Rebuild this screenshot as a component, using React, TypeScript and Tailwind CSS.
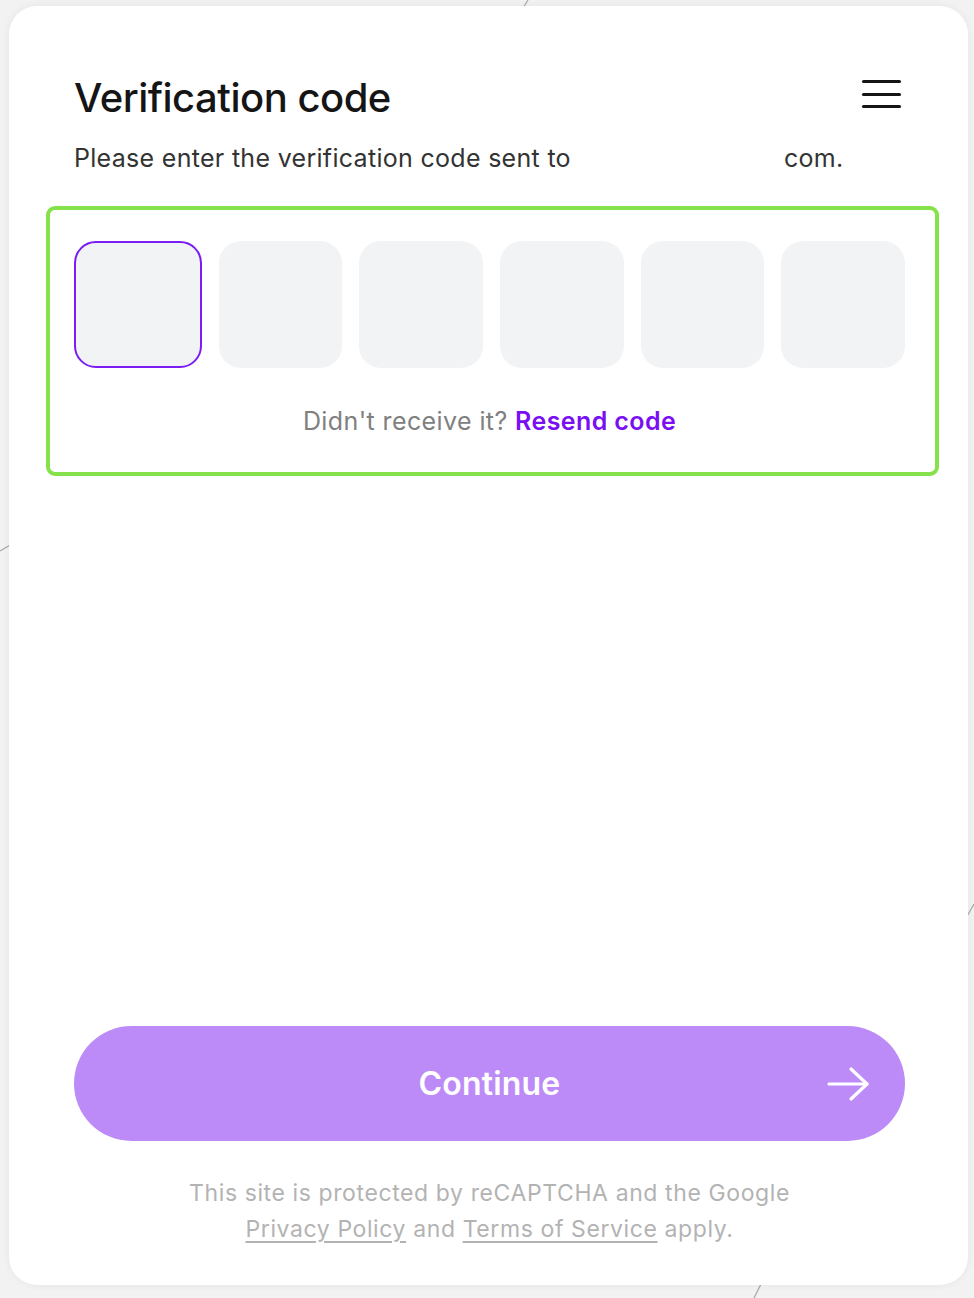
import React from "react";

export default function App() {
  const font = { fontFamily: "Inter, 'Noto Sans', sans-serif" };
  return (
    <div
      className="relative w-[974px] h-[1298px] bg-[#f2f2f2] overflow-hidden pt-[6px] pl-[9px]"
      style={font}
    >
      <svg className="absolute inset-0" width="974" height="1298" viewBox="0 0 974 1298">
        <g stroke="#a8a8a8" strokeWidth="1.2" fill="none">
          <line x1="528" y1="0" x2="523" y2="8" />
          <line x1="0" y1="551" x2="12" y2="544" />
          <line x1="966" y1="918" x2="974" y2="904" />
          <line x1="762" y1="1282" x2="754" y2="1298" />
        </g>
      </svg>
      <div className="relative w-[959px] h-[1279px] bg-white rounded-[28px] shadow-[0_0_8px_rgba(0,0,0,0.06)] flex flex-col pt-[68px] pl-[65px] pr-[63px] pb-[38px]">
        <div className="flex items-start justify-between">
          <h1 className="text-[40px] leading-[48px] font-medium text-[#151515] tracking-[-0.5px]">
            Verification code
          </h1>
          <div className="mt-[6px] mr-[4px] flex flex-col gap-[9.5px] w-[39px]">
            <div className="h-[3px] rounded-full bg-[#151515]" />
            <div className="h-[3px] rounded-full bg-[#151515]" />
            <div className="h-[3px] rounded-full bg-[#151515]" />
          </div>
        </div>
        <p className="mt-[20px] text-[25px] leading-[32px] tracking-[0.3px] text-[#333333] flex">
          <span>Please enter the verification code sent to</span>
          <span className="ml-[213px]">com.</span>
        </p>
        <div className="mt-[32px] -ml-[28px] -mr-[34px] border-4 border-[#86e24a] rounded-[9px] pt-[31px] pl-[24px] pr-[30px] pb-[35px]">
          <div className="flex gap-[17px]">
            <div className="flex-1 h-[127px] rounded-[22px] bg-[#f2f3f4] border-2 border-[#7a1cf2]" />
            <div className="flex-1 h-[127px] rounded-[22px] bg-[#f2f3f4]" />
            <div className="flex-1 h-[127px] rounded-[22px] bg-[#f2f3f4]" />
            <div className="flex-1 h-[127px] rounded-[22px] bg-[#f2f3f4]" />
            <div className="flex-1 h-[127px] rounded-[22px] bg-[#f2f3f4]" />
            <div className="flex-1 h-[127px] rounded-[22px] bg-[#f2f3f4]" />
          </div>
          <p className="mt-[37px] text-center text-[25px] leading-[32px] tracking-[0.4px] text-[#808080]">
            Didn't receive it?{" "}
            <span className="font-semibold text-[#7a0ff2]">Resend code</span>
          </p>
        </div>
        <div className="flex-1" />
        <button className="relative h-[115px] w-full rounded-full bg-[#bc8bf7] flex items-center justify-center">
          <span className="text-[32px] font-semibold text-white tracking-[0.2px]">Continue</span>
          <svg
            className="absolute right-[34px] top-1/2 -translate-y-1/2"
            width="44"
            height="36"
            viewBox="0 0 44 36"
            fill="none"
            stroke="white"
            strokeWidth="3.2"
            strokeLinecap="round"
            strokeLinejoin="round"
          >
            <line x1="2" y1="18" x2="40" y2="18" />
            <polyline points="24,3 40,18 24,33" />
          </svg>
        </button>
        <div className="mt-[34px] text-center text-[23px] leading-[36px] tracking-[0.6px] text-[#b3b3b3]">
          <div>This site is protected by reCAPTCHA and the Google</div>
          <div>
            <span className="underline underline-offset-4">Privacy Policy</span> and{" "}
            <span className="underline underline-offset-4">Terms of Service</span> apply.
          </div>
        </div>
      </div>
    </div>
  );
}
